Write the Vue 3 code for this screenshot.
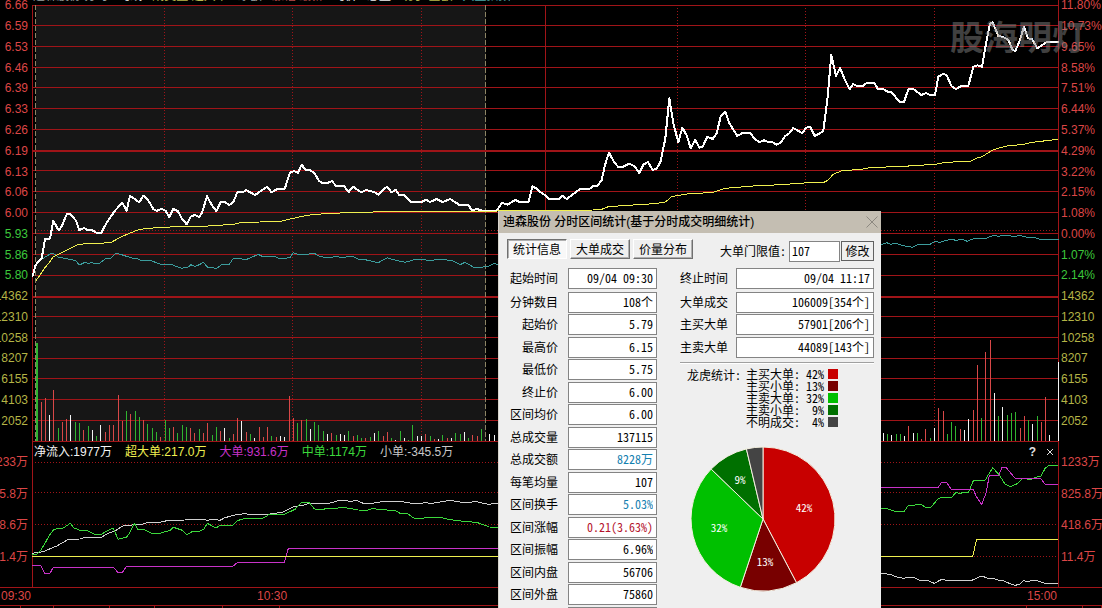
<script setup>
import { ref } from 'vue'

const prices = ['6.66', '6.59', '6.53', '6.46', '6.39', '6.33', '6.26', '6.19', '6.13', '6.06', '6.00', '5.93', '5.86', '5.80']
const percents = ['11.80%', '10.73%', '9.65%', '8.58%', '7.51%', '6.44%', '5.37%', '4.29%', '3.22%', '2.15%', '1.08%', '0.00%', '1.07%', '2.14%']
const volumes = ['14362', '12310', '10258', '8207', '6155', '4103', '2052']
const flows = ['1233万', '825.8万', '418.6万', '11.4万']

const leftAxis = [
  ...prices.map((t, i) => ({ t, c: i > 10 ? 'down' : 'up' })),
  ...volumes.map((t) => ({ t, c: 'vol' })),
]
const rightAxis = [
  ...percents.map((t, i) => ({ t, c: i > 11 ? 'down' : 'up' })),
  ...volumes.map((t) => ({ t, c: 'vol' })),
]

// Chart units are thirds of a pixel; each run is [x offset, y offset, points].
const trace = (...runs) =>
  runs
    .flatMap(([dx, dy, pts]) => pts.split(' ').map((p) => {
      const [x, y] = p.split(',').map(Number)
      return `${x + dx},${y + dy}`
    }))
    .join(' ')

const gridRows = [16, 76, 139, 202, 262, 325, 388, 511, 574, 637, 700, 763, 826, 949, 1012, 1075, 1135, 1198, 1261, 1324]
const heavyRows = [453, 891]
const dottedCols = [493, 877, 1264, 2032, 2416, 2803]

const priceLine = trace(
  [0, 0, '97,831 107,795 117,783 125,775 135,718 150,716 160,662 176,691 186,678 200,643 210,641 228,662 238,690 252,684 262,690 276,690 290,699 304,698 320,668 345,632 367,608 380,632 390,587 418,607 430,587 443,598 460,627 470,633 485,626 497,633 508,651 520,627 534,634 545,655 560,673 572,650 585,645 598,651 607,636 621,588 634,613 649,634 662,606 675,606 688,615 700,606 712,577 728,577 738,570 765,585 802,560'],
  [810, 0, '4,577 22,567 44,567 60,518 72,513 84,518 95,494 106,509 120,510 133,519 147,543 157,549 173,549 186,543 198,558 222,558 236,576 250,560 273,577 288,570 312,576 326,584 342,566 352,560 364,577 377,570 388,585 402,585 424,606 454,606 468,599 480,606 500,597 518,606 541,597 567,614 594,614 606,631 620,627 638,632 680,632 696,608 712,614 736,600 748,606 776,606 787,559 800,566'],
  [1620, 0, '0,575 14,585 26,597 58,597 68,587 80,597 120,567 148,567 160,558 172,558 185,540 195,495 207,458 222,486 234,500 250,500 267,491 283,498 298,519 310,494 324,486 338,510 350,506 362,484 376,415 388,295 400,370 415,427 427,383 440,406 452,444 466,420 478,443 488,440 502,410 518,417 530,400 542,350 556,335 568,370 592,408 606,400 630,399 645,417 658,426 672,421 684,426 698,427 710,434 722,428 736,408 748,400 760,384 787,400 798,383 810,380 824,408'],
  [2460, 0, '0,400 10,392 22,300 34,165 48,228 60,204 75,240 89,267 100,252 110,258 128,258 142,248 163,248 173,266 190,267 203,275 214,276 238,305 252,306 265,268 280,267 304,285 318,279 330,285 345,285 355,230 370,221 380,226 395,259 408,267 422,259 445,258 460,200 472,196 486,200 500,120 510,72 518,67 535,108 550,111 565,120 578,150 586,153 600,120 612,80 624,115 636,117 652,145 680,126 716,126'],
)

const averageLine = trace(
  [0, 0, '108,842 120,825 134,804 150,785 160,770 190,756 230,735 262,730 306,730 335,726 365,710 410,691 440,685 500,682 530,679 610,679 700,673 725,667 780,666'],
  [810, 0, '0,663 35,663 70,655 110,646 165,641 255,637 420,634 680,633'],
  [1620, 0, '0,632 160,630 185,628 205,620 310,613 345,611 376,606 395,590 440,582 520,577 555,565 650,557 730,554 770,550'],
  [2460, 0, '0,547 12,547 25,540 38,524 65,512 125,508 150,503 250,499 345,493 375,487 450,484 470,474 486,470 520,449 560,438 610,433 635,427 715,418'],
)

const indexLine = trace(
  [0, 0, '107,795 125,778 150,762 160,760 175,771 220,780 228,783 238,795 255,787 265,791 275,787 285,791 300,789 320,774 332,775 345,762 355,761 395,774 410,775 425,782 450,781 480,792 515,794 545,805 565,801 572,794 585,799 598,794 610,787 622,801 650,805 665,794 688,793 700,775 740,778 775,763 790,771 810,768'],
  [810, 0, '15,770 30,776 60,773 70,758 85,764 135,761 150,770 180,773 200,768 213,774 245,768 265,778 285,779 325,788 352,773 370,779 405,787 430,780 455,778 480,782 505,778 545,781 570,794 585,787 615,804 655,799 672,791 684,793'],
  [2460, 0, '183,735 200,728 212,733 225,729 245,736 278,742 292,734 330,733 345,724 360,727 390,718 410,721 425,717 442,724 465,714 475,716 500,714 520,706 535,709 550,706 585,709 600,706 625,713 640,712 660,718 716,719'],
)

const barRuns = [
  [0, '124,337r 136,323r 148,375w 160,299r 175,414g 187,395r 199,388r 211,375w 226,395g 238,398g 250,420r 265,408g 277,420w 289,437g 301,405w 316,425r 328,406r 340,405r 355,314r 367,392r 379,362g 391,372r 406,363g 418,380g 430,390r 442,402g 457,414g 469,426g 481,440r 496,390g 508,413g 520,411r 532,430g 547,406g 559,412g 571,414r 583,430r 598,416g 610,430r 622,400r 637,434g 649,411g 661,423r 673,413w 688,443g 700,433r 712,384r 724,393w 739,426r 751,432g 763,446g'],
  [750, '1,432g 13,444w 28,411r 40,441r 52,411r 64,438g 79,441r 91,438w 103,441w 118,318r 130,384r 142,398g 154,390r 169,387g 181,416w 193,396g 205,405g 220,423g 232,431w 244,429r 259,435g 271,431w 283,434w 295,423g 310,438r 322,435g 334,443g 346,444r 361,441g 373,429w 385,422g 400,438r 412,426r 424,444g 436,449w 451,422g 463,445w 475,449g 487,405g 502,438w 514,438w 526,432r 541,438g 553,447r 565,447w 577,435g 592,445r 604,444w 616,429g 631,432g 643,426w 655,444g 667,435r 682,438r 694,417g 718,432w 733,435w'],
  [2610, '40,429w 52,432g 64,435w 79,432g 91,432g 103,438w 115,407r 130,429w 142,429g 154,447r 166,416r 181,445g 193,414w 205,353r 220,362r 232,432g 244,395g 256,407g 271,416r 283,420w 295,387w 310,361r 322,225r 334,384g 346,186r 361,150r 373,309w 385,378g 397,351w 412,375g 424,370g 436,366g 451,413r 463,378r 475,390g 487,402w 502,378g 514,396r 526,321r 538,435w 565,216w'],
]
const bars = barRuns.flatMap(([dx, run]) => run.split(' ').map((b) => {
  const [x, rest] = b.split(',')
  const y = parseInt(rest) + 870
  return { x: Math.floor((Number(x) + dx) / 3) * 3, y, h: 1323 - y, c: rest.slice(-1) }
}))

const midFlow = trace(
  [0, 870, '97,795 110,793 120,784 135,760 148,736 160,720 172,715 190,714 211,700 222,714 238,720 262,722 285,733 305,733 318,724 340,714 354,748 380,741 390,727 403,700 415,720 430,717 455,730 480,730 510,721 520,712 545,720 560,734 578,724 598,724 612,717 622,700 648,714 660,706 698,706 712,692 735,685'],
  [750, 870, '0,685 40,684 55,675 105,672 135,658 155,637 178,638 193,657 210,658 265,654 285,653 325,660 350,661 370,655 385,659 435,661 450,670 475,672 490,684 515,685 535,682 570,682 600,689 640,694 680,697 718,711 744,712'],
  [2610, 870, '32,656 50,656 75,664 103,664 115,646 155,644 168,653 182,653 205,625 220,622 245,622 258,607 268,611 278,608 295,608 310,572 345,571 368,533 388,555 405,582 422,590 440,582 460,564 480,570 500,561 512,560 526,534 537,526 565,526'],
)
const smallFlow = trace(
  [0, 870, '97,790 130,785 170,768 205,748 240,747 255,742 300,744 325,730 350,720 365,709 380,706 425,703 440,698 460,699 480,697 505,691 555,690 610,688 622,691 640,688 660,691 675,683 710,674 735,671'],
  [750, 870, '0,674 30,675 60,672 100,666 130,650 160,646 178,640 230,642 265,632 292,632 300,635 318,631 340,640 365,640 395,635 450,634 500,642 525,638 545,640 600,631 650,639 675,634 715,643 744,639'],
  [2610, 870, '32,850 60,853 80,861 100,865 115,862 130,862 150,871 175,872 193,880 215,868 235,872 305,871 335,858 360,867 372,866 385,870 400,872 420,881 436,886 450,882 460,872 475,875 487,871 505,873 525,880 565,880'],
)
const bigFlow = trace(
  [0, 870, '97,826 122,826 134,850 150,850 160,831 340,831 353,847 367,847 380,829 698,829 712,818'],
  [750, 870, '0,817 103,817 115,775 744,775'],
  [2610, 870, '32,592 205,592 215,577 230,577 244,598 310,598 318,618 335,643 348,610 358,556 387,555 396,532 408,532 436,566 512,566 526,583 565,583'],
)
const hugeFlow = trace([0, 870, '97,799'], [2610, 870, '308,799 320,748 565,748'])

const legend = [
  { t: '净流入:1977万', c: 'net' },
  { t: '超大单:217.0万', c: 'huge' },
  { t: '大单:931.6万', c: 'big' },
  { t: '中单:1174万', c: 'mid' },
  { t: '小单:-345.5万', c: 'small' },
]

const footTabs = [20, 32, 56, 44, 68, 56, 751, 56, 18]

const tabs = ['统计信息', '大单成交', '价量分布']
const active = ref(0)
const threshold = ref('107')

const leftStats = [
  ['起始时间', '09/04 09:30'],
  ['分钟数目', '108个'],
  ['起始价', '5.79'],
  ['最高价', '6.15'],
  ['最低价', '5.75'],
  ['终止价', '6.00'],
  ['区间均价', '6.00'],
  ['总成交量', '137115'],
  ['总成交额', '8228万', 'blue'],
  ['每笔均量', '107'],
  ['区间换手', '5.03%', 'blue'],
  ['区间涨幅', '0.21(3.63%)', 'red'],
  ['区间振幅', '6.96%'],
  ['区间内盘', '56706'],
  ['区间外盘', '75860'],
  ['', ''],
]
const rightStats = [
  ['终止时间', '09/04 11:17'],
  ['大单成交', '106009[354个]'],
  ['主买大单', '57901[206个]'],
  ['主卖大单', '44089[143个]'],
]
const shares = [
  { name: '主买大单:', pct: '42%', c: 'buy-big' },
  { name: '主买小单:', pct: '13%', c: 'buy-small' },
  { name: '主卖大单:', pct: '32%', c: 'sell-big' },
  { name: '主卖小单:', pct: '9%', c: 'sell-small' },
  { name: '不明成交:', pct: '4%', c: 'unknown' },
]

const R = 72
const stops = [0, 42.3, 55.1, 87.2, 96.3, 100]
const at = (p) => {
  const a = (p / 100) * 2 * Math.PI
  return `${(R * Math.sin(a)).toFixed(2)} ${(-R * Math.cos(a)).toFixed(2)}`
}
const slices = shares.map((s, i) => ({
  c: s.c,
  d: `M0 0 L${at(stops[i])} A${R} ${R} 0 0 1 ${at(stops[i + 1])} Z`,
}))
const pieLabels = [
  { t: '42%', x: 41, y: -7 },
  { t: '13%', x: 2, y: 47 },
  { t: '32%', x: -44, y: 13 },
  { t: '9%', x: -23, y: -35 },
]
</script>

<template>
  <div class="terminal">
    <header class="ticker">
      <span class="t-grey">迪森股份 分时</span>
      <span class="t-white">均线</span>
      <span class="t-yellow">成交量 超大单</span>
      <span class="t-grey">净额</span>
      <span class="t-red">涨幅 最新</span>
      <span class="t-white">均价</span>
      <span class="t-white">总量</span>
      <span class="t-yellow">现手 金额</span>
      <span class="t-cyan">大盘指数</span>
    </header>

    <main class="charts">
      <div class="axis axis-left">
        <span v-for="(a, i) in leftAxis" :key="i" :class="a.c">{{ a.t }}</span>
      </div>
      <svg class="plot" viewBox="96 0 3081 1326" preserveAspectRatio="none" shape-rendering="crispEdges">
        <rect class="selection" x="108" y="16" width="1349" height="1308" />
        <line v-for="x in dottedCols" :key="x" class="rule dots" :x1="x + 0.5" :x2="x + 0.5" y1="25" y2="1324" />
        <line class="rule dots" x1="96" x2="3177" y1="691.5" y2="691.5" />
        <line v-for="y in gridRows" :key="y" class="rule" x1="96" x2="3177" :y1="y + 0.5" :y2="y + 0.5" />
        <line v-for="y in heavyRows" :key="y" class="rule heavy" x1="96" x2="3177" :y1="y" :y2="y" />
        <line class="rule" x1="1636.5" x2="1636.5" y1="16" y2="1324" />
        <line class="rule" x1="97.5" x2="97.5" y1="16" y2="1326" />
        <line class="rule" x1="3175.5" x2="3175.5" y1="0" y2="1326" />
        <line class="cursor" x1="106.5" x2="106.5" y1="16" y2="1324" />
        <line class="cursor" x1="1456.5" x2="1456.5" y1="16" y2="1324" />
        <rect class="bar-g" x="108" y="1028" width="5" height="295" />
        <rect v-for="b in bars" :key="b.x" :class="'bar-' + b.c" :x="b.x" :y="b.y" width="3" :height="b.h" />
        <polyline class="line cyan" :points="indexLine" />
        <polyline class="line price" :points="priceLine" />
        <polyline class="line yellow" :points="averageLine" />
      </svg>
      <div class="axis axis-right">
        <span v-for="(a, i) in rightAxis" :key="i" :class="a.c">{{ a.t }}</span>
      </div>

      <div class="flow-axis axis-left">
        <span v-for="f in flows" :key="f">{{ f }}</span>
      </div>
      <section class="flow">
        <svg class="flow-plot" viewBox="96 1326 3081 435" preserveAspectRatio="none" shape-rendering="crispEdges">
          <line v-for="y in [1387.5, 1477.5, 1573.5, 1669.5]" :key="y" class="rule dots" x1="96" x2="3177" :y1="y" :y2="y" />
          <line class="rule" x1="97.5" x2="97.5" y1="1326" y2="1761" />
          <line class="rule" x1="3175.5" x2="3175.5" y1="1326" y2="1761" />
          <polyline class="line silver" :points="smallFlow" />
          <polyline class="line green" :points="midFlow" />
          <polyline class="line purple" :points="bigFlow" />
          <polyline class="line yellow" :points="hugeFlow" />
        </svg>
        <div class="flow-head">
          <span v-for="l in legend" :key="l.t" :class="l.c">{{ l.t }}</span>
          <button type="button" class="tool help" aria-label="帮助">?</button>
          <button type="button" class="tool" aria-label="关闭">
            <svg viewBox="0 0 8 8" width="8" height="8"><path d="M1 1 L7 7 M7 1 L1 7" /></svg>
          </button>
        </div>
      </section>
      <div class="flow-axis axis-right">
        <span v-for="f in flows" :key="f">{{ f }}</span>
      </div>
    </main>

    <footer class="times">
      <span>09:30</span>
      <span class="mid-time">10:30</span>
      <span class="end-time">15:00</span>
    </footer>
    <div class="bottom-strip">
      <i v-for="(w, i) in footTabs" :key="i" :style="{ flexGrow: w }"></i>
    </div>

    <div class="watermark">股海明灯</div>

    <section class="dialog" role="dialog" aria-labelledby="dialog-title">
      <header class="titlebar">
        <h1 id="dialog-title">迪森股份 分时区间统计(基于分时成交明细统计)</h1>
        <button type="button" class="close" aria-label="关闭窗口">
          <svg viewBox="0 0 12 12" width="12" height="12"><path d="M0.500 0.500 L11.500 11.500 M11.500 0.500 L0.500 11.500" /></svg>
        </button>
      </header>
      <div class="toolbar">
        <button
          v-for="(t, i) in tabs" :key="t" type="button"
          class="tab" :class="{ pressed: active === i }" @click="active = i"
        >{{ t }}</button>
        <label class="threshold-label" for="threshold">大单门限值:</label>
        <input id="threshold" v-model="threshold" class="threshold" type="text">
        <button type="button" class="modify">修改</button>
      </div>
      <div class="body">
        <div class="stats">
          <div v-for="(s, i) in leftStats" :key="i" class="stat">
            <label :for="'l' + i">{{ s[0] }}</label>
            <input :id="'l' + i" type="text" readonly :value="s[1]" :class="s[2]">
          </div>
        </div>
        <div class="right">
          <div class="stats wide">
            <div v-for="(s, i) in rightStats" :key="i" class="stat">
              <label :for="'r' + i">{{ s[0] }}</label>
              <input :id="'r' + i" type="text" readonly :value="s[1]">
            </div>
          </div>
          <hr>
          <div class="share">
            <span class="share-title">龙虎统计:</span>
            <ul>
              <li v-for="s in shares" :key="s.name">
                <span>{{ s.name }}</span><b>{{ s.pct }}</b><i :class="s.c"></i>
              </li>
            </ul>
          </div>
          <svg class="pie" viewBox="-73 -73 146 146" width="146" height="146">
            <path v-for="s in slices" :key="s.c" :class="s.c" :d="s.d" />
            <text v-for="p in pieLabels" :key="p.t" :x="p.x" :y="p.y">{{ p.t }}</text>
          </svg>
        </div>
      </div>
    </section>
  </div>
</template>

<style>
body {
  margin: 0;
  background: #000;
}
</style>

<style scoped>
.terminal {
  position: relative;
  min-height: 100vh;
  overflow: hidden;
  background: #000;
  font: 12px/14px "Liberation Sans", "Noto Sans CJK SC", sans-serif;
}
.ticker {
  position: absolute;
  top: 0;
  left: 33px;
  z-index: 1;
  display: flex;
  align-items: flex-end;
  gap: 10px;
  height: 3px;
  overflow: hidden;
  white-space: nowrap;
}
.t-grey { color: #9aa0a0; }
.t-white { color: #eee; }
.t-yellow { color: #b8b84c; }
.t-red { color: #b84c4c; }
.t-cyan { color: #4ca8a8; }

.charts {
  display: grid;
  grid-template-columns: 32px 1fr 43px;
  grid-template-rows: 442px 145px;
}
.axis {
  display: flex;
  flex-direction: column;
  height: 436px;
  margin-top: -5px;
}
.axis span {
  flex: 1;
  display: flex;
  align-items: center;
}
.axis-left,
.axis-right {
  overflow: hidden;
  white-space: nowrap;
}
.axis-left {
  padding-right: 4px;
}
.axis-left span {
  display: flex;
  justify-content: flex-end;
}
.axis-right {
  padding-left: 2px;
}
.up { color: #dc4646; }
.down { color: #3cc83c; }
.vol { color: #b4b446; }

.plot,
.flow-plot {
  display: block;
  width: 100%;
  height: 100%;
}
.selection { fill: #161616; }
.rule {
  stroke: #a01418;
  stroke-width: 1px;
  vector-effect: non-scaling-stroke;
}
.heavy { stroke-width: 2px; }
.dots { stroke-dasharray: 1px 2px; }
.cursor {
  stroke: #8c8464;
  stroke-width: 1px;
  stroke-dasharray: 5px 2px;
  vector-effect: non-scaling-stroke;
}
.bar-r { fill: #d84848; }
.bar-g { fill: #30b430; }
.bar-w { fill: #f4f4f4; }
.line {
  fill: none;
  stroke-width: 1px;
  stroke-linejoin: round;
  vector-effect: non-scaling-stroke;
}
.price {
  stroke: #fff;
  stroke-width: 2px;
}
.yellow { stroke: #f0f050; }
.cyan { stroke: #3c9c9c; }
.green { stroke: #3cd83c; }
.silver { stroke: #d0d0d0; }
.purple { stroke: #c832c8; }

.flow-axis {
  display: flex;
  flex-direction: column;
  justify-content: space-between;
  height: 109px;
  padding-top: 13px;
  color: #dc4646;
}
.flow {
  position: relative;
  min-width: 0;
}
.flow-head {
  position: absolute;
  top: 3px;
  left: 2px;
  right: 5px;
  display: flex;
  align-items: center;
  gap: 13px;
  white-space: nowrap;
}
.net { color: #f4f4f4; }
.huge { color: #f0f050; }
.big { color: #c832c8; }
.mid { color: #3cd83c; }
.small { color: #c8c8c8; }
.tool {
  display: flex;
  padding: 0;
  border: 0;
  background: none;
  color: #e0e0e0;
  font: bold 12px/14px "Liberation Sans", sans-serif;
}
.tool path {
  fill: none;
  stroke: #e0e0e0;
}
.help { margin-left: auto; margin-right: -3px; }

.times {
  display: flex;
  height: 17px;
  line-height: 16px;
  border-top: 1px solid #a01418;
  border-bottom: 1px solid #a01418;
  padding-left: 1px;
  color: #dc4646;
}
.mid-time { margin-left: 226px; }
.end-time {
  margin-left: auto;
  margin-right: 45px;
}
.bottom-strip {
  display: flex;
  height: 2px;
  overflow: hidden;
}
.bottom-strip i {
  flex: 1 1 0;
  border-right: 1px solid #a01418;
}

.watermark {
  position: absolute;
  top: 16px;
  right: 16px;
  color: rgba(128, 128, 128, 0.5);
  font: bold 34px/40px "Noto Sans CJK SC", sans-serif;
}

.dialog {
  position: absolute;
  top: 211px;
  left: 498px;
  box-sizing: border-box;
  width: 383px;
  border-left: 1px solid #d8d4cc;
  background: #efefef;
  color: #000;
  font: 12px/14px "Noto Sans Mono CJK SC", "Noto Sans CJK SC", monospace;
}
.titlebar {
  display: flex;
  align-items: center;
  justify-content: space-between;
  height: 22px;
  padding: 0 3px 0 4px;
  background: #c4beb2;
}
.titlebar h1 {
  margin: 0;
  font: 500 12px/20px "Liberation Sans", "Noto Sans CJK SC", sans-serif;
}
.close {
  display: flex;
  padding: 0;
  border: 0;
  background: none;
}
.close path {
  fill: none;
  stroke: #8c8880;
}
.toolbar {
  display: flex;
  align-items: flex-start;
  padding: 6px 7px 0 8px;
}
.dialog button,
.dialog input {
  box-sizing: border-box;
  font: inherit;
  border-radius: 0;
}
.tab {
  width: 60px;
  height: 20px;
  margin-right: 3px;
  padding: 0;
  border: 1px solid;
  border-color: #fff #707070 #707070 #fff;
  box-shadow: inset -1px -1px #b0b0b0;
  background: #efefef;
  color: #000;
}
.tab.pressed {
  border-color: #707070 #fff #fff #707070;
  box-shadow: inset 1px 1px #b0b0b0;
  background: #f8f8f8;
}
.threshold-label {
  margin: 5px 3px 0 auto;
}
.threshold {
  width: 51px;
  height: 21px;
  margin-top: 2px;
  padding: 0 2px 2px;
  border: 1px solid #848484;
  background: #fff;
}
.dialog .modify {
  width: 33px;
  height: 20px;
  margin: 2px 0 0 1px;
  padding: 0;
  border: 1px solid #606060;
  background: #efefef;
  color: #000;
}
.body {
  display: flex;
  justify-content: space-between;
  padding: 6px 7px 0 0;
}
.stats {
  width: 158px;
}
.wide {
  width: auto;
}
.stat {
  display: flex;
  align-items: center;
  justify-content: flex-end;
  height: 21px;
  margin-bottom: 2px;
}
.stat:nth-child(even) { margin-bottom: 1px; }
.stat:first-child { margin-bottom: 3px; }
.stat label {
  margin-right: 10px;
  padding-bottom: 2px;
}
.stat input {
  width: 89px;
  height: 21px;
  padding: 0 3px 3px;
  border: 1px solid #848484;
  background: #fff;
  color: #000;
  text-align: right;
}
.wide label { margin-right: 8px; }
.wide input { width: 138px; }
.stat .blue { color: #1480b0; }
.stat .red { color: #b4142c; }
.right { width: 194px; }
.right hr {
  margin: 4px 0;
  border: 0;
  border-top: 1px solid #a0a0a0;
  border-bottom: 1px solid #fff;
}
.share {
  display: flex;
  padding-left: 7px;
}
.share ul {
  margin: 0 0 0 5px;
  padding: 0;
  list-style: none;
  line-height: 12px;
}
.share li {
  display: flex;
  align-items: center;
  height: 12px;
}
.share b {
  width: 24px;
  font-weight: normal;
  text-align: right;
}
.share i {
  width: 10px;
  height: 10px;
  margin-left: 4px;
}
i.buy-big { background: #c80000; }
i.buy-small { background: #780000; }
i.sell-big { background: #00c000; }
i.sell-small { background: #007000; }
i.unknown { background: #444; }
.pie {
  display: block;
  margin: 18px 0 16px 10px;
}
.pie path {
  stroke: #f4f0e0;
  stroke-width: 1px;
}
path.buy-big { fill: #c80000; }
path.buy-small { fill: #780000; }
path.sell-big { fill: #00c000; }
path.sell-small { fill: #007000; }
path.unknown { fill: #444; }
.pie text {
  fill: #fff;
  font-size: 11px;
  text-anchor: middle;
}
</style>
